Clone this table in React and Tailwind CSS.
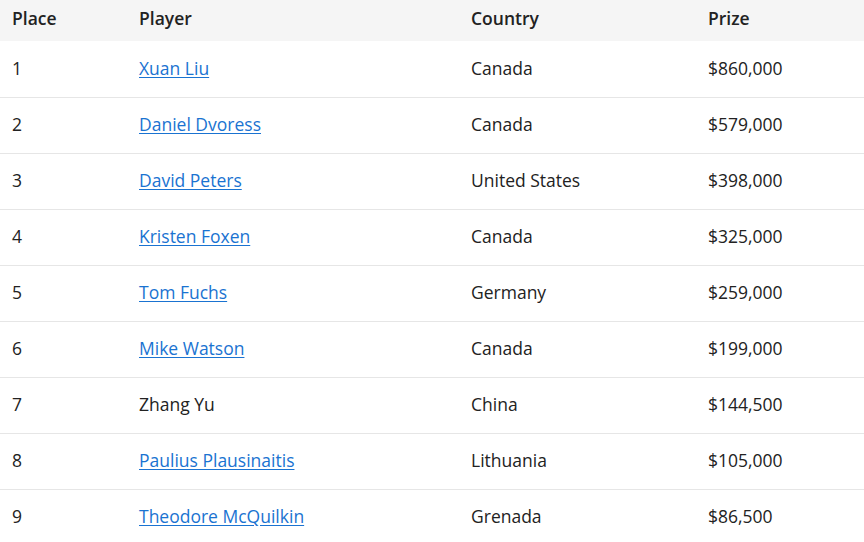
import React from "react";

const rows = [
  ["1", "Xuan Liu", true, "Canada", "$860,000"],
  ["2", "Daniel Dvoress", true, "Canada", "$579,000"],
  ["3", "David Peters", true, "United States", "$398,000"],
  ["4", "Kristen Foxen", true, "Canada", "$325,000"],
  ["5", "Tom Fuchs", true, "Germany", "$259,000"],
  ["6", "Mike Watson", true, "Canada", "$199,000"],
  ["7", "Zhang Yu", false, "China", "$144,500"],
  ["8", "Paulius Plausinaitis", true, "Lithuania", "$105,000"],
  ["9", "Theodore McQuilkin", true, "Grenada", "$86,500"],
];

export default function App() {
  return (
    <div className="w-[864px] h-[542px] overflow-hidden bg-white text-[#222] font-['Open_Sans',sans-serif] text-[17.5px]">
      <table className="w-full table-fixed border-collapse">
        <colgroup>
          <col className="w-[127px]" />
          <col className="w-[332px]" />
          <col className="w-[237px]" />
          <col />
        </colgroup>
        <thead>
          <tr className="bg-[#f5f5f5] h-[41px]">
            <th className="text-left font-semibold pl-3 pb-1">Place</th>
            <th className="text-left font-semibold pl-3 pb-1">Player</th>
            <th className="text-left font-semibold pl-3 pb-1">Country</th>
            <th className="text-left font-semibold pl-3 pb-1">Prize</th>
          </tr>
        </thead>
        <tbody>
          {rows.map(([p, name, link, c, prize]) => (
            <tr key={p} className="h-[56px] border-b border-[#e6e6e6]">
              <td className="pl-3 pb-[2px]">{p}</td>
              <td className="pl-3 pb-[2px]">
                {link ? (
                  <a href="#" className="text-[#1a73d1] underline underline-offset-2">{name}</a>
                ) : (
                  name
                )}
              </td>
              <td className="pl-3 pb-[2px]">{c}</td>
              <td className="pl-3 pb-[2px]">{prize}</td>
            </tr>
          ))}
        </tbody>
      </table>
    </div>
  );
}
